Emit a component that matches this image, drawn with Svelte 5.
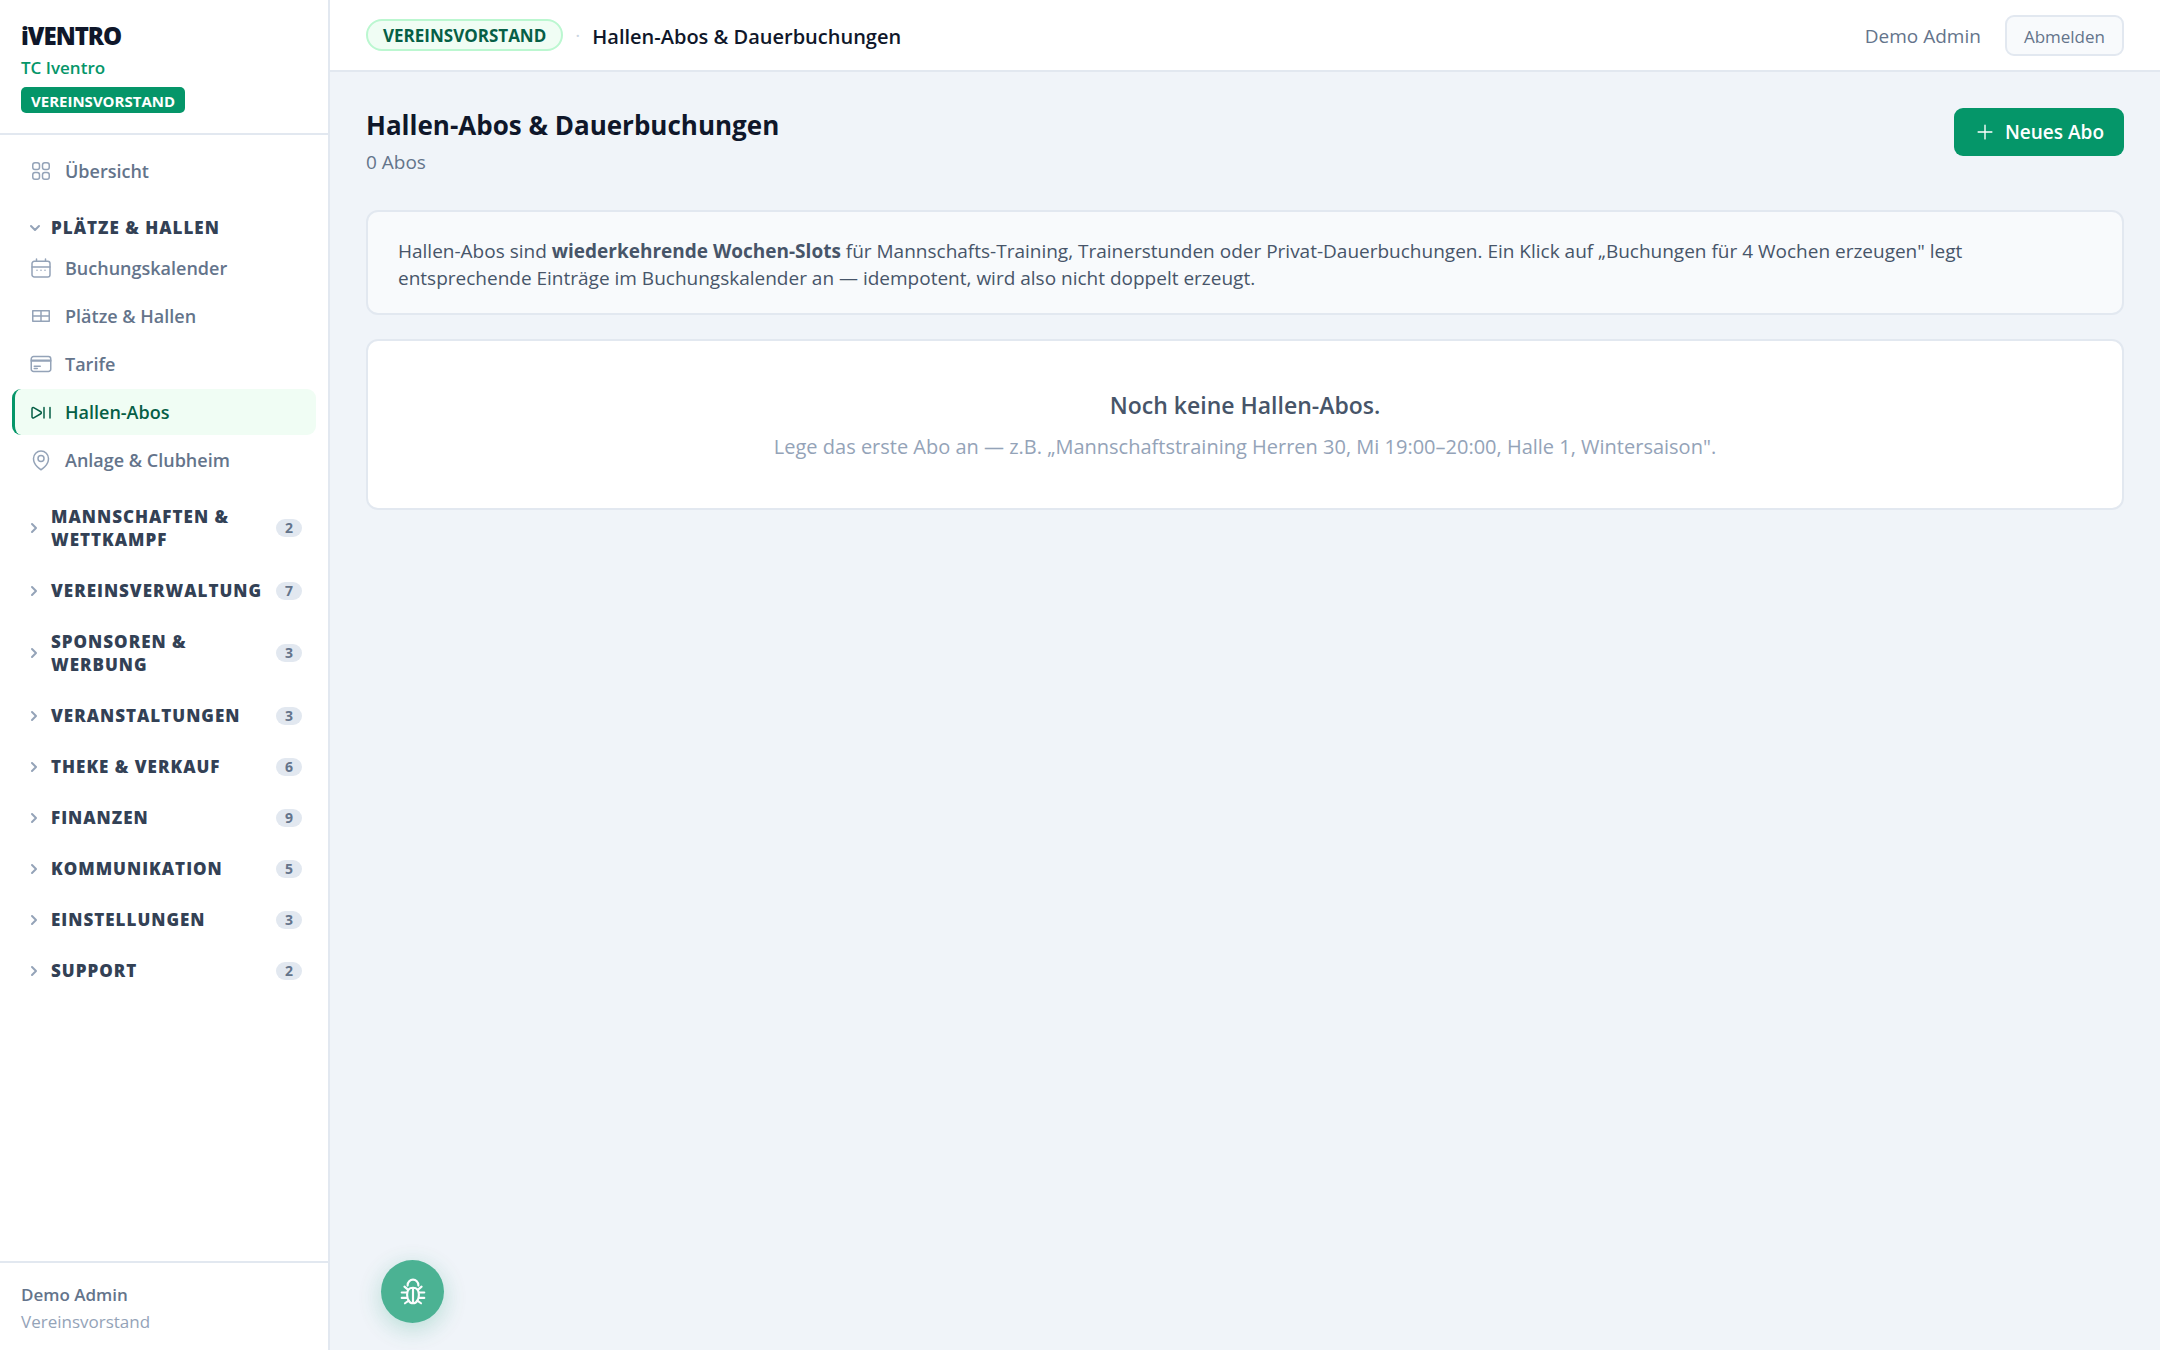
<script lang="ts">
    type Item = { label: string; icon: string[]; active?: boolean };
    type Group = { label: string; count?: number; open?: boolean; items?: Item[] };

    const overview: Item = {
        label: 'Übersicht',
        icon: [
            'M3.75 6A2.25 2.25 0 0 1 6 3.75h2.25A2.25 2.25 0 0 1 10.5 6v2.25a2.25 2.25 0 0 1-2.25 2.25H6a2.25 2.25 0 0 1-2.25-2.25V6Z',
            'M3.75 15.75A2.25 2.25 0 0 1 6 13.5h2.25a2.25 2.25 0 0 1 2.25 2.25V18a2.25 2.25 0 0 1-2.25 2.25H6A2.25 2.25 0 0 1 3.75 18v-2.25Z',
            'M13.5 6a2.25 2.25 0 0 1 2.25-2.25H18A2.25 2.25 0 0 1 20.25 6v2.25A2.25 2.25 0 0 1 18 10.5h-2.25a2.25 2.25 0 0 1-2.25-2.25V6Z',
            'M13.5 15.75a2.25 2.25 0 0 1 2.25-2.25H18a2.25 2.25 0 0 1 2.25 2.25V18A2.25 2.25 0 0 1 18 20.25h-2.25A2.25 2.25 0 0 1 13.5 18v-2.25Z'
        ]
    };

    const groups: Group[] = [
        {
            label: 'Plätze & Hallen',
            open: true,
            items: [
                {
                    label: 'Buchungskalender',
                    icon: [
                        'M7.5 3v2.25M16.5 3v2.25M3 11h18',
                        'M5.25 5.25h13.5A2.25 2.25 0 0 1 21 7.5v11.25A2.25 2.25 0 0 1 18.75 21H5.25A2.25 2.25 0 0 1 3 18.75V7.5a2.25 2.25 0 0 1 2.25-2.25Z',
                        'M8 14.25h.01M12 14.25h.01M16 14.25h.01'
                    ]
                },
                { label: 'Plätze & Hallen', icon: ['M3.75 6.75h16.5v10.5H3.75ZM12 6.75v10.5M3.75 12h16.5'] },
                {
                    label: 'Tarife',
                    icon: [
                        'M2.25 8.25h19.5M2.25 9h19.5m-16.5 5.25h6m-6 2.25h3',
                        'M4.5 19.5h15a2.25 2.25 0 0 0 2.25-2.25V6.75A2.25 2.25 0 0 0 19.5 4.5h-15a2.25 2.25 0 0 0-2.25 2.25v10.5A2.25 2.25 0 0 0 4.5 19.5Z'
                    ]
                },
                {
                    label: 'Hallen-Abos',
                    active: true,
                    icon: [
                        'M21 7.5V18M15 7.5V18M3 16.811V8.69c0-.864.933-1.406 1.683-.977l7.108 4.061a1.125 1.125 0 0 1 0 1.954l-7.108 4.061A1.125 1.125 0 0 1 3 16.811Z'
                    ]
                },
                {
                    label: 'Anlage & Clubheim',
                    icon: [
                        'M15 10.5a3 3 0 1 1-6 0 3 3 0 0 1 6 0Z',
                        'M19.5 10.5c0 7.142-7.5 11.25-7.5 11.25S4.5 17.642 4.5 10.5a7.5 7.5 0 1 1 15 0Z'
                    ]
                }
            ]
        },
        { label: 'Mannschaften & Wettkampf', count: 2 },
        { label: 'Vereinsverwaltung', count: 7 },
        { label: 'Sponsoren & Werbung', count: 3 },
        { label: 'Veranstaltungen', count: 3 },
        { label: 'Theke & Verkauf', count: 6 },
        { label: 'Finanzen', count: 9 },
        { label: 'Kommunikation', count: 5 },
        { label: 'Einstellungen', count: 3 },
        { label: 'Support', count: 2 }
    ];
</script>

{#snippet navItem(item: Item)}
    <a class="nav-item" class:active={item.active} href="#top" aria-current={item.active ? 'page' : undefined}>
        <svg class="icon" viewBox="0 0 24 24" aria-hidden="true">
            {#each item.icon as d}
                <path {d} />
            {/each}
        </svg>
        {item.label}
    </a>
{/snippet}

<div class="layout">
    <aside class="sidebar">
        <div class="brand">
            <div class="logo">iVENTRO</div>
            <div class="club">TC Iventro</div>
            <span class="role-tag">VEREINSVORSTAND</span>
        </div>

        <nav>
            {@render navItem(overview)}
            {#each groups as group}
                <button class="group-header" class:open={group.open} type="button" aria-expanded={!!group.open}>
                    <svg class="chevron" viewBox="0 0 14 14" aria-hidden="true">
                        <path d={group.open ? 'M3 5l4 4 4-4' : 'M4 3l4 4-4 4'} />
                    </svg>
                    <span class="group-label">{group.label}</span>
                    {#if group.count}
                        <span class="count">{group.count}</span>
                    {/if}
                </button>
                {#if group.open}
                    {#each group.items ?? [] as item}
                        {@render navItem(item)}
                    {/each}
                {/if}
            {/each}
        </nav>

        <div class="user">
            <div class="user-name">Demo Admin</div>
            <div class="user-role">Vereinsvorstand</div>
        </div>
    </aside>

    <div class="content">
        <header class="topbar">
            <span class="role-pill">VEREINSVORSTAND</span>
            <span class="dot">·</span>
            <span class="crumb">Hallen-Abos &amp; Dauerbuchungen</span>
            <span class="who">Demo Admin</span>
            <button class="logout" type="button">Abmelden</button>
        </header>

        <main>
            <div class="page-head">
                <div>
                    <h1>Hallen-Abos &amp; Dauerbuchungen</h1>
                    <p class="sub">0 Abos</p>
                </div>
                <button class="primary" type="button">
                    <svg class="plus" viewBox="0 0 24 24" aria-hidden="true">
                        <path d="M12 4.5v15m7.5-7.5h-15" />
                    </svg>
                    Neues Abo
                </button>
            </div>

            <section class="card info">
                Hallen-Abos sind <strong>wiederkehrende Wochen-Slots</strong> für Mannschafts-Training, Trainerstunden
                oder Privat-Dauerbuchungen. Ein Klick auf „Buchungen für 4 Wochen erzeugen" legt entsprechende Einträge
                im Buchungskalender an — idempotent, wird also nicht doppelt erzeugt.
            </section>

            <section class="card empty">
                <h2>Noch keine Hallen-Abos.</h2>
                <p>Lege das erste Abo an — z.B. „Mannschaftstraining Herren 30, Mi 19:00–20:00, Halle 1, Wintersaison".</p>
            </section>
        </main>
    </div>
</div>

<button class="bug" type="button" aria-label="Fehler melden">
    <svg viewBox="0 0 28 28" aria-hidden="true">
        <path d="M9 8V7.5a5 5 0 0 1 10 0V8" />
        <path d="M14 10c3.6 0 5.5 2.5 5.5 6.5S17.5 24.5 14 24.5s-5.5-4-5.500-8S10.4 10 14 10ZM14 10v14.500" />
        <path d="M9.5 12 6 9M8.5 14.500h-5M8.500 19.5h-5M10 22l-3.500 2.500" />
        <path d="M18.5 12 22 9M19.5 14.500h5M19.500 19.5h5M18 22l3.500 2.500" />
    </svg>
</button>

<style>
    :global(body) {
        margin: 0;
        background: #f0f4f9;
    }

    .layout {
        display: flex;
        min-height: 100vh;
        font-family: 'Segoe UI', 'Open Sans', sans-serif;
        font-size: 19px;
        color: #0f172a;
    }

    button {
        font-family: 'Segoe UI', 'Open Sans', sans-serif;
        cursor: pointer;
    }

    svg {
        fill: none;
        stroke: currentColor;
        stroke-linecap: round;
        stroke-linejoin: round;
        flex: none;
    }

    .sidebar {
        box-sizing: border-box;
        width: 330px;
        flex: none;
        display: flex;
        flex-direction: column;
        background: #fff;
        border-right: 2px solid #e2e8f0;
    }

    .brand {
        padding: 20px 21px;
        border-bottom: 2px solid #e2e8f0;
    }

    .logo {
        font-size: 24px;
        line-height: 32px;
        font-weight: 800;
        letter-spacing: -1px;
    }

    .club {
        font-size: 17px;
        line-height: 32px;
        font-weight: 600;
        color: #059669;
    }

    .role-tag {
        display: block;
        width: fit-content;
        margin-top: 3px;
        padding: 2px 10px 0;
        border-radius: 5px;
        background: #059669;
        color: #fff;
        font-size: 15px;
        line-height: 24px;
        font-weight: 700;
    }

    nav {
        flex: 1;
        display: flex;
        flex-direction: column;
        padding: 13px 12px;
    }

    .nav-item {
        display: flex;
        align-items: center;
        gap: 12px;
        padding: 0 14px;
        margin-bottom: 2px;
        border-left: 3px solid transparent;
        border-radius: 9px;
        font-size: 18px;
        line-height: 46px;
        font-weight: 600;
        color: #64748b;
        text-decoration: none;
    }

    .icon {
        width: 24px;
        height: 24px;
        stroke-width: 1.5;
        color: #94a3b8;
    }

    .nav-item.active {
        background: #f0fdf4;
        border-left-color: #059669;
        color: #065f46;
    }

    .active .icon {
        color: #065f46;
    }

    .group-header {
        display: flex;
        align-items: center;
        gap: 9px;
        margin-top: 16px;
        margin-bottom: 2px;
        padding: 5px 14px 5px 16px;
        border: 0;
        background: none;
        text-align: left;
        color: #334155;
        font-size: 17px;
        line-height: 23px;
        font-weight: 800;
        letter-spacing: 1px;
        text-transform: uppercase;
    }

    .nav-item + .group-header {
        margin-top: 15px;
    }

    .group-header.open {
        margin-bottom: 1px;
    }

    .chevron {
        width: 14px;
        height: 14px;
        stroke-width: 2;
        color: #94a3b8;
    }

    .group-label {
        flex: 1;
    }

    .count {
        min-width: 26px;
        border-radius: 9px;
        background: #e2e8f0;
        color: #64748b;
        font-size: 14px;
        line-height: 18px;
        font-weight: 700;
        letter-spacing: 0;
        text-align: center;
    }

    .user {
        padding: 18px 21px 15px;
        border-top: 2px solid #e2e8f0;
        font-size: 17px;
        line-height: 27px;
    }

    .user-name {
        font-weight: 600;
        color: #64748b;
    }

    .user-role {
        color: #94a3b8;
    }

    .content {
        flex: 1;
        min-width: 0;
    }

    .topbar {
        display: flex;
        align-items: center;
        height: 70px;
        padding: 0 36px;
        background: #fff;
        border-bottom: 2px solid #e2e8f0;
    }

    .role-pill {
        padding: 1px 15px 0;
        border: 2px solid #bbf7d0;
        border-radius: 16px;
        background: #f0fdf4;
        color: #065f46;
        font-size: 17px;
        line-height: 27px;
        font-weight: 700;
    }

    .dot {
        margin: 0 12px;
        color: #cbd5e1;
    }

    .crumb {
        padding-top: 2px;
        font-size: 20px;
        font-weight: 600;
    }

    .who {
        margin-left: auto;
        margin-right: 24px;
        padding-top: 2px;
        color: #64748b;
    }

    .logout {
        padding: 2px 17px 0;
        border: 2px solid #e2e8f0;
        border-radius: 9px;
        background: #f8fafc;
        color: #64748b;
        font-size: 17px;
        line-height: 35px;
    }

    main {
        padding: 36px;
    }

    .page-head {
        display: flex;
        justify-content: space-between;
        align-items: flex-start;
        margin-bottom: 34px;
    }

    h1 {
        margin: 0;
        font-size: 26px;
        line-height: 34px;
        font-weight: 700;
    }

    .sub {
        margin: 6px 0 0;
        font-size: 19px;
        line-height: 28px;
        color: #64748b;
    }

    .primary {
        display: flex;
        align-items: center;
        gap: 9px;
        padding: 0 20px;
        border: 0;
        border-radius: 9px;
        background: #059669;
        color: #fff;
        font-size: 19px;
        line-height: 48px;
        font-weight: 600;
    }

    .plus {
        width: 22px;
        height: 22px;
        stroke-width: 1.5;
    }

    .card {
        border: 2px solid #e2e8f0;
        border-radius: 12px;
        background: #fff;
    }

    .info {
        padding: 26px 30px 21px;
        margin-bottom: 24px;
        background: #f8fafc;
        color: #475569;
        line-height: 27px;
    }

    .empty {
        padding: 47px 30px 46px;
        text-align: center;
    }

    h2 {
        margin: 0 0 10px;
        font-size: 23px;
        line-height: 34px;
        font-weight: 600;
        color: #475569;
    }

    .empty p {
        margin: 0;
        font-size: 20px;
        line-height: 30px;
        color: #94a3b8;
    }

    .bug {
        position: fixed;
        left: 381px;
        bottom: 27px;
        display: flex;
        align-items: center;
        justify-content: center;
        width: 63px;
        height: 63px;
        padding: 0;
        border: 0;
        border-radius: 50%;
        background: #059669;
        color: #fff;
        opacity: 0.7;
        box-shadow: 0 6px 24px rgba(5, 150, 105, 0.35);
    }

    .bug svg {
        width: 30px;
        height: 30px;
        stroke-width: 2;
    }
</style>
